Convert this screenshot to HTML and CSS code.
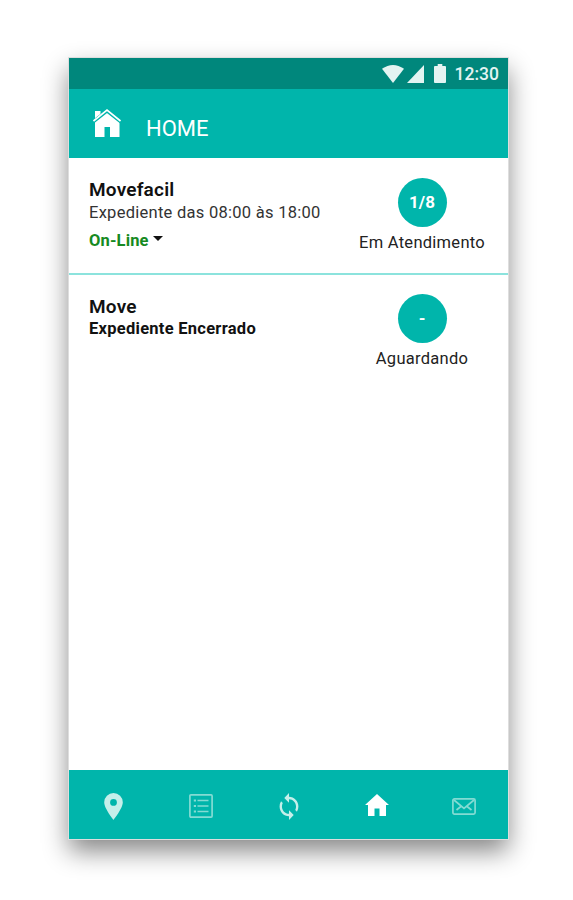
FILE: index.html
```html
<!DOCTYPE html>
<html lang="pt-BR">
<head>
    <meta charset="UTF-8">
    <meta name="viewport" content="width=device-width, initial-scale=1.0">
    <title>Movefacil | Home</title>
    <link rel="stylesheet" href="styles.css">
</head>
<body>
    <div class="phone">
        <div class="status-bar">
            <svg class="wifi" width="22" height="18" viewBox="0 0 22 19" preserveAspectRatio="none"><path d="M0 4Q11-4 22 4L11 19Z"/></svg>
            <svg class="signal" width="17" height="18" viewBox="0 0 18 18" preserveAspectRatio="none"><path d="M18 0V18H0Z"/></svg>
            <svg class="battery" width="12" height="19" viewBox="0 0 13 19" preserveAspectRatio="none"><path d="M4 0h5v2h3q1 0 1 1v15q0 1-1 1H1q-1 0-1-1V3q0-1 1-1h3z"/></svg>
            <span class="clock">12:30</span>
        </div>

        <header class="header">
            <svg class="header-icon" width="28" height="28" viewBox="0 0 28 28">
                <path fill="#fff" d="M2 2h5.500v5L2 11.500z"/>
                <path fill="#fff" d="M14 3L26.500 13.500V28H17V18h-5.500v10H2V13z"/>
                <path fill="none" stroke="#00b5ab" stroke-width="3.400" d="M0 13L14 2l14 11"/>
                <path fill="none" stroke="#fff" stroke-width="1.700" d="M.5 12L14 1.200 27.500 12"/>
            </svg>
            <h1>HOME</h1>
        </header>

        <main class="list">
            <div class="item">
                <div class="info">
                    <h2>Movefacil</h2>
                    <p class="hours">Expediente das 08:00 às 18:00</p>
                    <p class="online">On-Line <span class="caret"></span></p>
                </div>
                <div class="queue">
                    <div class="badge">1/8</div>
                    <p class="attending">Em Atendimento</p>
                </div>
            </div>
            <div class="item">
                <div class="info">
                    <h2>Move</h2>
                    <p class="closed">Expediente Encerrado</p>
                </div>
                <div class="queue">
                    <div class="badge">-</div>
                    <p class="waiting">Aguardando</p>
                </div>
            </div>
        </main>

        <nav class="nav">
            <a class="nav-item">
                <svg width="19" height="27" viewBox="0 0 19 27"><path fill="currentColor" fill-rule="evenodd" d="M9.500 0A9.300 9.300 0 0 0 .2 9.300C.2 15.500 9.500 27 9.500 27s9.300-11.500 9.300-17.700A9.300 9.300 0 0 0 9.500 0zm0 6a3.400 3.400 0 1 1 0 6.800 3.400 3.400 0 0 1 0-6.800z"/></svg>
            </a>
            <a class="nav-item thin">
                <svg width="24" height="24" viewBox="0 0 24 24" fill="none" stroke="currentColor" stroke-width="1.700">
                    <rect x=".9" y=".9" width="22.200" height="22.200" rx="1"/>
                    <path d="M8.500 6.500h11M8.500 12h11M8.500 17.500h11"/>
                    <path stroke-width="2.200" d="M4.800 6.500H7M4.800 12H7M4.800 17.500H7"/>
                </svg>
            </a>
            <a class="nav-item">
                <svg width="20" height="27" viewBox="3.500 1 17 22" preserveAspectRatio="none"><path fill="currentColor" d="M12 4V1L8 5l4 4V6c3.310 0 6 2.690 6 6 0 1.010-.25 1.970-.7 2.800l1.460 1.460A7.930 7.930 0 0 0 20 12c0-4.420-3.580-8-8-8zm0 14c-3.310 0-6-2.690-6-6 0-1.010.25-1.970.7-2.800L5.240 7.740A7.930 7.930 0 0 0 4 12c0 4.420 3.580 8 8 8v3l4-4-4-4v3z"/></svg>
            </a>
            <a class="nav-item active">
                <svg width="24" height="22" viewBox="0 0 24 22"><path fill="currentColor" d="M12 0l12 11h-3v11h-6.500v-7.500h-5V22H3V11H0z"/></svg>
            </a>
            <a class="nav-item thin">
                <svg width="24" height="17" viewBox="0 0 24 17" fill="none" stroke="currentColor" stroke-width="1.700">
                    <rect x=".9" y=".9" width="22.200" height="15.200" rx="1.500"/>
                    <path d="M2 2l10 8.500L22 2M4.500 12l5-4M19.500 12l-5-4"/>
                </svg>
            </a>
        </nav>
    </div>
</body>
</html>
```
FILE: styles.css
```css
* {
    box-sizing: border-box;
}
body {
    margin: 0;
    padding: 58px 65px 0 69px;
    height: 900px;
    background-color: #fff;
    font-family: Roboto, sans-serif;
    color: #111;
    overflow: hidden;
}
h1, h2, p {
    margin: 0;
}
svg {
    display: block;
}
.phone {
    display: flex;
    flex-direction: column;
    height: 781px;
    background-color: #fff;
    box-shadow: 0 0 0 1px #dedede, 0 12px 24px rgba(0,0,0,0.48);
}
.status-bar {
    display: flex;
    align-items: center;
    justify-content: flex-end;
    height: 31px;
    padding-right: 9px;
    background-color: #00877c;
    fill: #e3f4f2;
}
.signal {
    margin-left: 3px;
}
.battery {
    margin: 0 9px 0 10px;
}
.clock {
    font-size: 17.5px;
    font-weight: 500;
    color: #e3f4f2;
}
.header {
    display: flex;
    height: 69px;
    padding: 20px 24px;
    background-color: #00b5ab;
}
.header h1 {
    margin: 6px 0 0 25px;
    font-size: 22px;
    line-height: 28px;
    font-weight: 400;
    color: #fff;
}
.list {
    flex: 1;
}
.item {
    display: flex;
    justify-content: space-between;
    height: 115px;
    padding: 20px 14px 0 20px;
}
.item + .item {
    border-top: 2px solid #8ce3dd;
}
.item + .item .queue {
    margin-top: -1px;
}
.item h2 {
    font-size: 19px;
    line-height: 23px;
    font-weight: 600;
    letter-spacing: 0.2px;
}
.item p {
    font-size: 16.5px;
    line-height: 22px;
    white-space: nowrap;
}
.item .hours {
    margin-top: 1px;
    color: #333;
    letter-spacing: 0.27px;
}
.item .online {
    margin-top: 6px;
    font-weight: 700;
    letter-spacing: 0.15px;
    color: #168a22;
}
.caret {
    display: inline-block;
    border: 5px solid transparent;
    border-top-color: #111;
    border-bottom: 0;
    vertical-align: 5px;
}
.item .closed {
    font-weight: 700;
    letter-spacing: 0.27px;
}
.queue {
    width: 144px;
    text-align: center;
}
.item .attending,
.item .waiting {
    color: #222;
    letter-spacing: 0.27px;
}
.badge {
    width: 49px;
    height: 49px;
    margin: 0 auto 5px;
    border-radius: 50%;
    background-color: #00b5ab;
    font-size: 17px;
    line-height: 49px;
    font-weight: 700;
    color: #fff;
}
.nav {
    display: flex;
    height: 69px;
    padding-left: 1px;
    background-color: #00b5ab;
}
.nav-item {
    display: flex;
    flex: 1;
    align-items: center;
    justify-content: center;
    padding-top: 3px;
    color: #c5efea;
}
.nav-item.thin {
    color: #83dbd3;
}
.nav-item.active {
    padding-top: 0;
    color: #fff;
}
```
